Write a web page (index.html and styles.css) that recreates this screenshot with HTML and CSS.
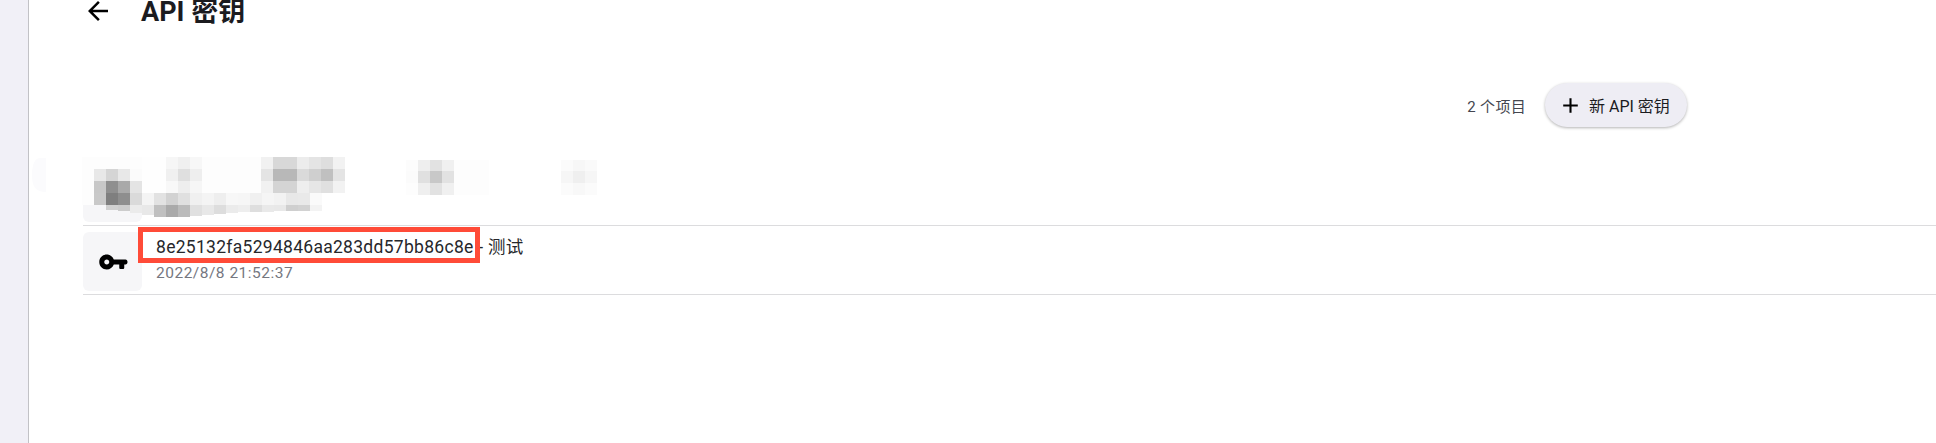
FILE: index.html
```html
<!DOCTYPE html>
<html lang="zh-CN">
<head>
  <meta charset="UTF-8" />
  <meta name="viewport" content="width=device-width, initial-scale=1.0"/>
  <title>API 密钥</title>
  <link rel="stylesheet" href="styles.css">
</head>
<body>

  <div class="layout">
    <aside class="rail"></aside>

    <main class="content">
      <header class="page-head">
        <button class="icon-btn" type="button" aria-label="返回">
          <svg viewBox="0 0 24 24" width="30" height="30"><path d="M20 11H7.83l5.59-5.59L12 4l-8 8 8 8 1.41-1.41L7.83 13H20v-2z"/></svg>
        </button>
        <h1>API 密钥</h1>
      </header>

      <div class="toolbar">
        <span class="count">2 个项目</span>
        <button class="add-btn" type="button">
          <svg viewBox="0 0 24 24" width="25" height="25"><path d="M19 13h-6v6h-2v-6H5v-2h6V5h2v6h6v2z"/></svg>
          <span>新 API 密钥</span>
        </button>
      </div>

      <ul class="key-list">
        <li class="key-row">
          <div class="key-icon"></div>
        </li>
        <li class="key-row">
          <div class="key-icon">
            <svg viewBox="0 0 24 24" width="30" height="30"><path fill-rule="evenodd" d="M12.65 10C11.83 7.67 9.61 6 7 6c-3.31 0-6 2.69-6 6s2.69 6 6 6c2.61 0 4.83-1.67 5.65-4H17v2.5c0 .6.5 1 1 1h2c.5 0 1-.4 1-1V14h1c1 0 1.6-1 1.6-2s-.6-2-1.6-2H12.65zM7 14c-1.1 0-2-.9-2-2s.9-2 2-2 2 .9 2 2-.9 2-2 2z"/></svg>
          </div>
          <div class="key-text">
            <div class="key-name">8e25132fa5294846aa283dd57bb86c8e - 测试</div>
            <div class="key-date">2022/8/8 21:52:37</div>
          </div>
        </li>
      </ul>
    </main>
  </div>

  <!-- red annotation box around the key -->
  <div class="mark"></div>

  <!-- pixelated patch hiding the first key -->
  <svg class="mosaic" width="600" height="70" viewBox="0 0 600 70" shape-rendering="crispEdges">
    <rect x="82" y="0" width="84" height="48" fill="#fdfdfd"/>
    <rect x="202" y="0" width="59" height="36" fill="#fdfdfd"/>
    <rect x="142" y="0" width="24" height="36" fill="#fefefe"/>

    <rect x="166" y="0" width="12" height="12" fill="#f6f6f6"/>
    <rect x="178" y="0" width="12" height="12" fill="#f0f0f0"/>
    <rect x="190" y="0" width="12" height="12" fill="#f7f7f7"/>
    <rect x="261" y="0" width="12" height="12" fill="#f1f1f1"/>
    <rect x="273" y="0" width="24" height="12" fill="#d8d8d8"/>
    <rect x="297" y="0" width="12" height="12" fill="#ececec"/>
    <rect x="309" y="0" width="12" height="12" fill="#e4e4e4"/>
    <rect x="321" y="0" width="12" height="12" fill="#dedede"/>
    <rect x="333" y="0" width="12" height="12" fill="#f2f2f2"/>

    <rect x="94" y="12" width="12" height="12" fill="#e8e8e8"/>
    <rect x="106" y="12" width="12" height="12" fill="#d5d5d5"/>
    <rect x="118" y="12" width="12" height="12" fill="#e8e8e8"/>
    <rect x="130" y="12" width="12" height="12" fill="#fbfbfb"/>
    <rect x="166" y="12" width="12" height="12" fill="#f0f0f0"/>
    <rect x="178" y="12" width="12" height="12" fill="#dfdfdf"/>
    <rect x="190" y="12" width="12" height="12" fill="#eeeeee"/>
    <rect x="261" y="12" width="12" height="12" fill="#e4e4e4"/>
    <rect x="273" y="12" width="24" height="12" fill="#b8b8b8"/>
    <rect x="297" y="12" width="12" height="12" fill="#dadada"/>
    <rect x="309" y="12" width="12" height="12" fill="#cfcfcf"/>
    <rect x="321" y="12" width="12" height="12" fill="#c0c0c0"/>
    <rect x="333" y="12" width="12" height="12" fill="#e4e4e4"/>

    <rect x="94" y="24" width="12" height="12" fill="#c8c8c8"/>
    <rect x="106" y="24" width="12" height="12" fill="#8f8f8f"/>
    <rect x="118" y="24" width="12" height="12" fill="#a9a9a9"/>
    <rect x="130" y="24" width="12" height="12" fill="#e4e4e4"/>
    <rect x="166" y="24" width="12" height="12" fill="#f8f8f8"/>
    <rect x="178" y="24" width="12" height="12" fill="#eeeeee"/>
    <rect x="190" y="24" width="12" height="12" fill="#f6f6f6"/>
    <rect x="261" y="24" width="12" height="12" fill="#f1f1f1"/>
    <rect x="273" y="24" width="24" height="12" fill="#d4d4d4"/>
    <rect x="297" y="24" width="12" height="12" fill="#eeeeee"/>
    <rect x="309" y="24" width="12" height="12" fill="#e6e6e6"/>
    <rect x="321" y="24" width="12" height="12" fill="#e0e0e0"/>
    <rect x="333" y="24" width="12" height="12" fill="#f2f2f2"/>

    <rect x="94" y="36" width="12" height="12" fill="#c9c9c9"/>
    <rect x="106" y="36" width="12" height="12" fill="#7f7f7f"/>
    <rect x="118" y="36" width="12" height="12" fill="#8e8e8e"/>
    <rect x="130" y="36" width="12" height="12" fill="#dadada"/>
    <rect x="142" y="36" width="12" height="12" fill="#f4f4f4"/>
    <rect x="154" y="36" width="12" height="12" fill="#e2e2e2"/>
    <rect x="166" y="36" width="12" height="12" fill="#d2d2d2"/>
    <rect x="178" y="36" width="12" height="12" fill="#e0e0e0"/>
    <rect x="190" y="36" width="12" height="12" fill="#f0f0f0"/>
    <rect x="202" y="36" width="12" height="12" fill="#f4f4f4"/>
    <rect x="214" y="36" width="12" height="12" fill="#eeeeee"/>
    <rect x="226" y="36" width="12" height="12" fill="#f7f7f7"/>
    <rect x="238" y="36" width="12" height="12" fill="#f6f6f6"/>
    <rect x="250" y="36" width="12" height="12" fill="#f0f0f0"/>
    <rect x="262" y="36" width="12" height="12" fill="#f5f5f5"/>
    <rect x="274" y="36" width="12" height="12" fill="#f2f2f2"/>
    <rect x="286" y="36" width="12" height="12" fill="#e8e8e8"/>
    <rect x="298" y="36" width="12" height="12" fill="#e9e9e9"/>
    <rect x="310" y="36" width="12" height="12" fill="#fafafa"/>

    <rect x="106" y="48" width="12" height="5" fill="#d0d0d0"/>
    <rect x="118" y="48" width="12" height="6" fill="#cccccc"/>
    <rect x="130" y="48" width="12" height="8" fill="#ebebeb"/>
    <rect x="142" y="48" width="12" height="10" fill="#e8e8e8"/>
    <rect x="154" y="48" width="12" height="12" fill="#c0c0c0"/>
    <rect x="166" y="48" width="12" height="12" fill="#aaaaaa"/>
    <rect x="178" y="48" width="12" height="12" fill="#bbbbbb"/>
    <rect x="190" y="48" width="12" height="11" fill="#e0e0e0"/>
    <rect x="202" y="48" width="12" height="10" fill="#e8e8e8"/>
    <rect x="214" y="48" width="12" height="9" fill="#dddddd"/>
    <rect x="226" y="48" width="12" height="8" fill="#ebebeb"/>
    <rect x="238" y="48" width="12" height="7" fill="#eeeeee"/>
    <rect x="250" y="48" width="12" height="7" fill="#dedede"/>
    <rect x="262" y="48" width="12" height="7" fill="#e9e9e9"/>
    <rect x="274" y="48" width="12" height="6" fill="#e8e8e8"/>
    <rect x="286" y="48" width="12" height="6" fill="#cfcfcf"/>
    <rect x="298" y="48" width="12" height="6" fill="#d2d2d2"/>
    <rect x="310" y="48" width="12" height="6" fill="#f3f3f3"/>

    <rect x="406" y="3" width="12" height="11" fill="#fcfcfc"/>
    <rect x="418" y="3" width="12" height="11" fill="#eeeeee"/>
    <rect x="430" y="3" width="12" height="11" fill="#e2e2e2"/>
    <rect x="442" y="3" width="12" height="11" fill="#f0f0f0"/>
    <rect x="454" y="3" width="35" height="35" fill="#fdfdfd"/>
    <rect x="406" y="14" width="12" height="12" fill="#fbfbfb"/>
    <rect x="418" y="14" width="12" height="12" fill="#e0e0e0"/>
    <rect x="430" y="14" width="12" height="12" fill="#c8c8c8"/>
    <rect x="442" y="14" width="12" height="12" fill="#e2e2e2"/>
    <rect x="406" y="26" width="12" height="12" fill="#fdfdfd"/>
    <rect x="418" y="26" width="12" height="12" fill="#efefef"/>
    <rect x="430" y="26" width="12" height="12" fill="#e2e2e2"/>
    <rect x="442" y="26" width="12" height="12" fill="#f0f0f0"/>

    <rect x="561" y="3" width="12" height="11" fill="#fbfbfb"/>
    <rect x="573" y="3" width="12" height="11" fill="#f7f7f7"/>
    <rect x="585" y="3" width="12" height="11" fill="#fafafa"/>
    <rect x="561" y="14" width="12" height="12" fill="#f6f6f6"/>
    <rect x="573" y="14" width="12" height="12" fill="#efefef"/>
    <rect x="585" y="14" width="12" height="12" fill="#f6f6f6"/>
    <rect x="561" y="26" width="12" height="12" fill="#fbfbfb"/>
    <rect x="573" y="26" width="12" height="12" fill="#f8f8f8"/>
    <rect x="585" y="26" width="12" height="12" fill="#fbfbfb"/>

    <path d="M46 1H40C35 1 32 7 32 18C32 29 35 35 46 35Z" fill="#fbfbfd" shape-rendering="auto"/>
  </svg>

</body>
</html>
```

FILE: styles.css
```css
* {
  box-sizing: border-box;
}

html,
body {
  height: 100%;
}

body {
  margin: 0;
  overflow: hidden;
  background: #ffffff;
  color: #1b1b1f;
  font-family: Roboto, "Noto Sans CJK SC", sans-serif;
}

.layout {
  display: flex;
  height: 100%;
}

.rail {
  flex: 0 0 29px;
  background: #f1f0f7;
  border-right: 1px solid #c2c2c6;
}

.content {
  flex: 1;
  padding-left: 54px;
  min-width: 0;
}

/* the page is scrolled a little, the title touches the top edge */
.page-head {
  display: flex;
  align-items: center;
  height: 30px;
  margin-top: -5px;
}

.icon-btn {
  width: 30px;
  height: 30px;
  margin-top: 2px;
  padding: 0;
  border: none;
  background: none;
  display: block;
}

.page-head h1 {
  margin: 4px 0 0 28px;
  font-size: 27px;
  font-weight: 700;
  line-height: 24px;
}

.toolbar {
  display: flex;
  justify-content: flex-end;
  align-items: center;
  gap: 19px;
  margin-top: 58px;
  padding-right: 249px;
}

.count {
  font-size: 15px;
  letter-spacing: 0.3px;
  color: #44464f;
}

.add-btn {
  display: flex;
  align-items: center;
  gap: 6px;
  height: 44px;
  width: 142px;
  padding: 0 0 0 13px;
  border: none;
  border-radius: 22px;
  background: #eeedf4;
  box-shadow: 0 1px 3px rgba(0, 0, 0, 0.3);
  color: #1b1b1f;
  font-family: inherit;
  font-size: 16px;
  font-weight: 400;
  white-space: nowrap;
}

.key-list {
  list-style: none;
  margin: 30px 0 0;
  padding: 0;
}

.key-row {
  display: flex;
  height: 69px;
  padding-top: 6px;
  gap: 14px;
  border-bottom: 1px solid #dcdcde;
}

.key-icon {
  flex: 0 0 59px;
  height: 59px;
  display: flex;
  align-items: center;
  justify-content: center;
  background: #f6f6f8;
  border-radius: 6px;
}

.key-name {
  font-size: 17.5px;
  font-weight: 400;
  letter-spacing: 0.29px;
  line-height: 25px;
  margin-top: 3px;
  color: #26272b;
}

.key-date {
  font-size: 15.5px;
  letter-spacing: 0.5px;
  line-height: 20px;
  margin-top: 3px;
  color: #75777f;
}

.mark {
  position: absolute;
  left: 138px;
  top: 227px;
  width: 342px;
  height: 36px;
  border: 5px solid #ff4b38;
}

.mosaic {
  position: absolute;
  left: 0;
  top: 157px;
}
```
